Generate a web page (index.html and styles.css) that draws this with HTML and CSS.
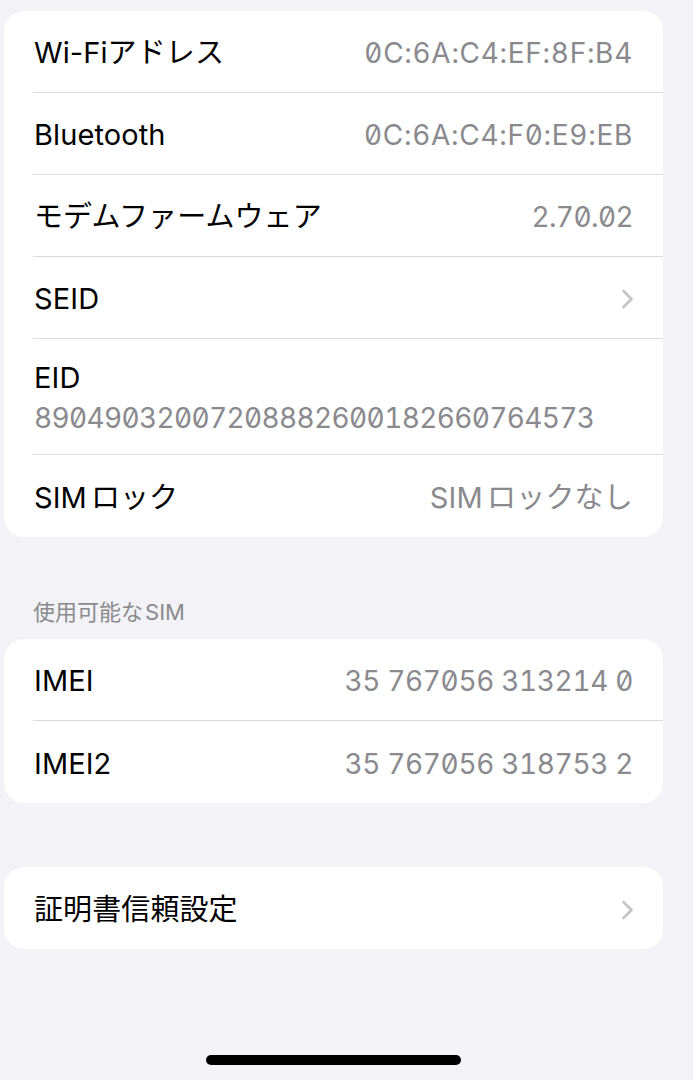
FILE: index.html
```html
<!DOCTYPE html>
<html lang="ja">
<head>
<meta charset="utf-8">
<title>情報</title>
<link rel="stylesheet" href="styles.css">
</head>
<body>
<main class="page">
  <section class="card">
    <div class="row"><div class="row-inner"><span class="label">Wi-Fiアドレス</span><span class="value value-mac">0C:6A:C4:EF:8F:B4</span></div></div>
    <div class="row"><div class="row-inner"><span class="label">Bluetooth</span><span class="value value-mac">0C:6A:C4:F0:E9:EB</span></div></div>
    <div class="row"><div class="row-inner"><span class="label">モデムファームウェア</span><span class="value">2.70.02</span></div></div>
    <div class="row"><div class="row-inner"><span class="label">SEID</span>
      <svg class="chevron" width="15" height="22" viewBox="0 0 15 22"><path d="M3.5 3 L11.5 11 L3.5 19" fill="none" stroke="#c4c4c7" stroke-width="2.6" stroke-linecap="round" stroke-linejoin="round"/></svg>
    </div></div>
    <div class="row row-tall"><div class="row-inner stack"><span class="label">EID</span><span class="value value-eid">89049032007208882600182660764573</span></div></div>
    <div class="row"><div class="row-inner"><span class="label"><span class="latin">SIM</span>ロック</span><span class="value value-text"><span class="latin">SIM</span>ロックなし</span></div></div>
  </section>

  <h2 class="section-header">使用可能な<span class="latin">SIM</span></h2>
  <section class="card">
    <div class="row"><div class="row-inner"><span class="label">IMEI</span><span class="value value-imei">35 767056 313214 0</span></div></div>
    <div class="row"><div class="row-inner"><span class="label">IMEI2</span><span class="value value-imei">35 767056 318753 2</span></div></div>
  </section>

  <section class="card card-last">
    <div class="row"><div class="row-inner"><span class="label">証明書信頼設定</span>
      <svg class="chevron" width="15" height="22" viewBox="0 0 15 22"><path d="M3.5 3 L11.5 11 L3.5 19" fill="none" stroke="#c4c4c7" stroke-width="2.6" stroke-linecap="round" stroke-linejoin="round"/></svg>
    </div></div>
  </section>

  <div class="home-indicator"></div>
</main>
</body>
</html>
```

FILE: styles.css
```css
* { box-sizing: border-box; }
html, body {
  margin: 0;
  padding: 0;
  background: #f2f2f7;
}
body {
  font-family: Inter, "Noto Sans CJK JP", "Noto Sans", sans-serif;
  color: #000;
  width: 693px;
  height: 1080px;
  overflow: hidden;
}
.page {
  padding: 11px 30px 0 4px;
  display: flex;
  flex-direction: column;
}
.card {
  background: #fff;
  border-radius: 20px;
  display: flex;
  flex-direction: column;
  overflow: hidden;
}
.row {
  padding-left: 29px;
}
.row-inner {
  height: 82px;
  display: flex;
  align-items: center;
  justify-content: space-between;
  padding: 3px 30px 0 0;
  border-bottom: 1px solid #dcdce0;
}
.row:last-child .row-inner { border-bottom: none; }
.row-tall .row-inner { height: 116px; padding-top: 2px; }
.stack {
  flex-direction: column;
  align-items: flex-start;
  justify-content: center;
  gap: 4px;
}
.label {
  font-size: 29px;
  line-height: 36px;
  letter-spacing: 0.1px;
  padding-left: 1px;
}
.latin { margin-right: 4px; }
.value {
  font-size: 28px;
  line-height: 36px;
  color: #8a8a8e;
  font-feature-settings: "tnum" 1, "zero" 1;
  letter-spacing: -0.6px;
}
.value-mac { letter-spacing: 0.7px; }
.value-imei { letter-spacing: -0.35px; }
.value-eid {
  letter-spacing: -0.65px;
  padding-left: 1px;
}
.value-text { letter-spacing: 0.2px; font-size: 29px; }
.chevron { display: block; margin-right: -2px; }
.section-header {
  margin: 62px 0 14px 0;
  padding-left: 29px;
  font-size: 22px;
  line-height: 26px;
  font-weight: 400;
  color: #8a8a8e;
}
.section-header .latin { margin-left: 2px; margin-right: 0; }
.card-last { margin-top: 64px; }
.home-indicator {
  align-self: center;
  margin-top: 106px;
  width: 255px;
  height: 10px;
  border-radius: 5px;
  background: #000;
}
```
